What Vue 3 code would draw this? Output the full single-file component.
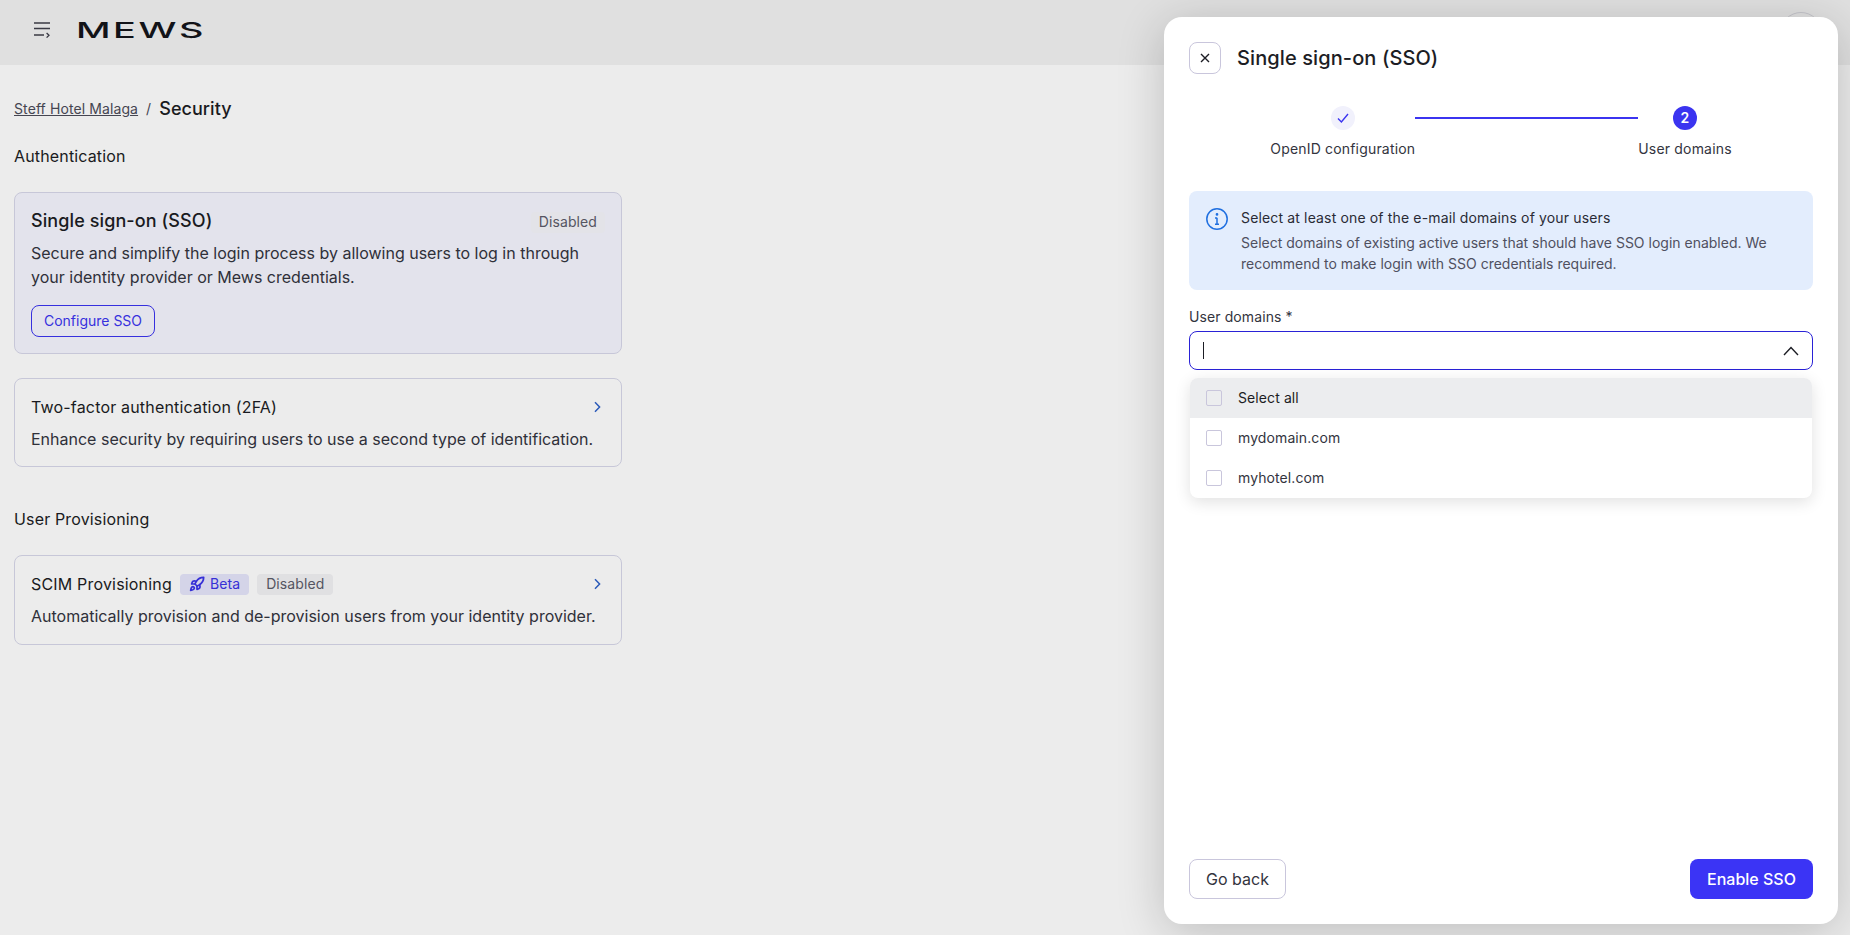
<template>
  <div class="app">
    <header class="topbar">
      <button type="button" class="topbar__menu" aria-label="Menu">
        <svg width="16" height="16" viewBox="0 0 16 16" fill="none" stroke="#3f3f4a" stroke-width="1.3">
          <path d="M0 1h16M0 6.5h16M0 13h10M12.6 11l2.4 2.2-2.4 2.4" />
        </svg>
      </button>
      <svg class="topbar__logo" width="130" height="18" viewBox="0 0 130 18">
        <text x="0" y="16.5" textLength="130" lengthAdjust="spacingAndGlyphs">MEWS</text>
      </svg>
      <span class="topbar__avatar"></span>
    </header>

    <main class="page">
      <nav class="crumbs">
        <a class="crumbs__link">Steff Hotel Malaga</a>
        <span class="crumbs__sep">/</span>
        <span class="crumbs__current">Security</span>
      </nav>

      <h2 class="section-title">Authentication</h2>
      <section class="card card--active">
        <div class="card__head">
          <span class="card__title card__title--big">Single sign-on (SSO)</span>
          <span class="badge badge--plain">Disabled</span>
        </div>
        <p class="card__text">
          Secure and simplify the login process by allowing users to log in through your identity provider or Mews credentials.
        </p>
        <button type="button" class="btn-outline">Configure SSO</button>
      </section>

      <section class="card card--second">
        <div class="card__head">
          <span class="card__title">Two-factor authentication (2FA)</span>
          <svg class="card__chevron" width="16" height="16" viewBox="0 0 16 16" fill="none" stroke="#2f62c8" stroke-width="1.5">
            <path d="M6 3.2 10.6 8 6 12.8" />
          </svg>
        </div>
        <p class="card__text">Enhance security by requiring users to use a second type of identification.</p>
      </section>

      <h2 class="section-title section-title--spaced">User Provisioning</h2>
      <section class="card">
        <div class="card__head">
          <span class="card__title">SCIM Provisioning</span>
          <span class="badge badge--beta">
            <svg width="16" height="16" viewBox="0 0 24 24" fill="none" stroke="#3b34e8" stroke-width="2.6" stroke-linecap="round" stroke-linejoin="round">
              <path d="M4.5 16.5c-1.5 1.26-2 5-2 5s3.74-.5 5-2c.71-.84.7-2.13-.09-2.91a2.18 2.18 0 0 0-2.91-.09z" />
              <path d="m12 15-3-3a22 22 0 0 1 2-3.95A12.88 12.88 0 0 1 22 2c0 2.72-.78 7.5-6 11a22.35 22.35 0 0 1-4 2z" />
              <path d="M9 12H4s.55-3.03 2-4c1.62-1.08 5 0 5 0" />
              <path d="M12 15v5s3.03-.55 4-2c1.08-1.62 0-5 0-5" />
            </svg>
            Beta
          </span>
          <span class="badge">Disabled</span>
          <svg class="card__chevron" width="16" height="16" viewBox="0 0 16 16" fill="none" stroke="#2f62c8" stroke-width="1.5">
            <path d="M6 3.2 10.6 8 6 12.8" />
          </svg>
        </div>
        <p class="card__text">Automatically provision and de-provision users from your identity provider.</p>
      </section>
    </main>

    <div class="overlay">
      <aside class="modal">
        <div class="modal__head">
          <button type="button" class="modal__close" aria-label="Close">
            <svg width="12" height="12" viewBox="0 0 12 12" fill="none" stroke="#1c1d24" stroke-width="1.4">
              <path d="M2 2l8 8M10 2l-8 8" />
            </svg>
          </button>
          <span class="modal__title">Single sign-on (SSO)</span>
        </div>

        <div class="stepper">
          <div class="step">
            <span class="step__dot step__dot--done">
              <svg width="14" height="14" viewBox="0 0 14 14" fill="none" stroke="#3b34f0" stroke-width="1.4">
                <path d="M2 7.6 5.4 11 12 3" />
              </svg>
            </span>
            <span class="step__label">OpenID configuration</span>
          </div>
          <div class="stepper__line"></div>
          <div class="step">
            <span class="step__dot step__dot--current">2</span>
            <span class="step__label">User domains</span>
          </div>
        </div>

        <div class="notice">
          <svg class="notice__icon" width="24" height="24" viewBox="0 0 24 24" fill="none" stroke="#1f6fe0" stroke-width="1.5">
            <circle cx="12" cy="12" r="10.2" />
            <path d="M12 10.8v6.4M10 11h2M10 17.2h4" />
            <circle cx="12" cy="7.4" r="0.6" fill="#1f6fe0" />
          </svg>
          <div>
            <div class="notice__title">Select at least one of the e-mail domains of your users</div>
            <div class="notice__text">
              Select domains of existing active users that should have SSO login enabled. We recommend to make login with SSO credentials required.
            </div>
          </div>
        </div>

        <label class="field-label">User domains *</label>
        <div class="select">
          <span class="select__caret"></span>
          <svg width="16" height="10" viewBox="0 0 16 10" fill="none" stroke="#1c1d24" stroke-width="1.4">
            <path d="M1 9l7-7.4L15 9" />
          </svg>
        </div>

        <ul class="options">
          <li
            v-for="(option, idx) in options"
            :key="option"
            class="options__row"
            :class="{ 'options__row--hover': idx === 0 }"
          >
            <span class="checkbox"></span>
            {{ option }}
          </li>
        </ul>

        <div class="modal__foot">
          <button type="button" class="btn-back">Go back</button>
          <button type="button" class="btn-primary">Enable SSO</button>
        </div>
      </aside>
    </div>
  </div>
</template>

<script setup>
const options = ['Select all', 'mydomain.com', 'myhotel.com']
</script>

<style scoped>
.app {
  position: relative;
  height: 935px;
  overflow: hidden;
  background: #FFFFFF;
  color: #1C1D24;
  font-family: Inter, "Liberation Sans", sans-serif;
  font-size: 16px;
  line-height: 24px;
  letter-spacing: 0.1px;
}

.topbar {
  display: flex;
  align-items: center;
  height: 65px;
  padding: 0 12px 0 34px;
  background: #F2F2F2;
}

.topbar__menu {
  display: flex;
  padding: 0;
  border: 0;
  background: none;
  margin: 0 26px 5px 0;
}

.topbar__logo {
  margin-top: -6px;
  overflow: visible;
}

.topbar__logo text {
  font-family: Inter, sans-serif;
  font-size: 22px;
  font-weight: 500;
  letter-spacing: 1.5px;
  fill: #14151B;
}

.topbar__avatar {
  width: 40px;
  height: 40px;
  margin-left: auto;
  margin-right: 16px;
  border: 1px solid #D5D5DC;
  border-radius: 50%;
}

.page {
  display: flex;
  flex-direction: column;
  align-items: flex-start;
  padding: 32px 14px;
}

.crumbs {
  display: flex;
  align-items: center;
  height: 24px;
  gap: 8px;
  font-size: 14px;
}

.crumbs__link {
  color: #4B4B58;
  text-decoration: underline;
}

.crumbs__sep {
  color: #4B4B58;
}

.crumbs__current {
  font-size: 18px;
  font-weight: 500;
  letter-spacing: 0.05px;
}

.section-title {
  margin: 23px 0 24px;
  font-size: 16px;
  font-weight: 400;
  line-height: 24px;
  letter-spacing: 0.15px;
}

.section-title--spaced {
  margin-top: 40px;
}

.card {
  box-sizing: border-box;
  width: 608px;
  padding: 16px;
  background: #FFFFFF;
  border: 1px solid #D8D8EA;
  border-radius: 8px;
}

.card--active {
  background: #F6F6FF;
}

.card--second {
  margin-top: 24px;
  padding-bottom: 15px;
}

.card__head {
  display: flex;
  align-items: center;
  gap: 8px;
  height: 24px;
  margin-bottom: 8px;
}

.card__title {
  font-weight: 400;
  letter-spacing: 0.18px;
}

.card__title--big {
  font-size: 18px;
  font-weight: 500;
  letter-spacing: 0.1px;
}

.card__chevron {
  margin-left: auto;
}

.card__text {
  margin: 0;
  color: #33343E;
  letter-spacing: 0;
}

.badge {
  display: inline-flex;
  align-items: center;
  gap: 5px;
  height: 21px;
  padding: 0 9px;
  border-radius: 4px;
  background: #F3F3F5;
  color: #5C5C6A;
  font-size: 14px;
}

.badge--plain {
  margin-left: auto;
  margin-top: 2px;
  padding: 0 8px;
  background: #F6F6FB;
}

.badge--beta {
  background: #E5E5FB;
  color: #3B34E8;
}

.btn-outline {
  height: 32px;
  width: 124px;
  margin-top: 16px;
  padding: 0;
  display: block;
  background: transparent;
  border: 1px solid #3B34F0;
  border-radius: 8px;
  color: #3B34F0;
  font: inherit;
  font-size: 14px;
}

.overlay {
  position: absolute;
  inset: 0;
  display: flex;
  justify-content: flex-end;
  padding: 17px 12px 11px 0;
  background: rgba(0, 0, 0, 0.075);
}

.modal {
  box-sizing: border-box;
  display: flex;
  flex-direction: column;
  width: 674px;
  padding: 25px;
  background: #FFFFFF;
  border-radius: 18px;
  box-shadow: 0 8px 48px rgba(0, 0, 0, 0.2);
}

.modal__head {
  display: flex;
  align-items: center;
  gap: 16px;
}

.modal__close {
  display: flex;
  align-items: center;
  justify-content: center;
  width: 32px;
  height: 32px;
  padding: 0;
  background: #FFFFFF;
  border: 1px solid #C9C6DC;
  border-radius: 8px;
}

.modal__title {
  font-size: 20px;
  font-weight: 500;
}

.stepper {
  display: flex;
  justify-content: center;
  margin-top: 32px;
}

.step {
  display: flex;
  flex-direction: column;
  align-items: center;
}

.step__dot {
  display: flex;
  align-items: center;
  justify-content: center;
  width: 24px;
  height: 24px;
  border-radius: 50%;
  font-size: 14px;
  font-weight: 600;
}

.step__dot--done {
  background: #F1F1FC;
}

.step__dot--current {
  background: #3B34F0;
  color: #FFFFFF;
}

.step__label {
  margin-top: 7px;
  font-size: 14px;
  letter-spacing: 0.18px;
  color: #33343E;
  white-space: nowrap;
}

.stepper__line {
  width: 223px;
  height: 2px;
  margin-top: 11px;
  background: #3B34F0;
}

.notice {
  display: flex;
  gap: 12px;
  height: 99px;
  box-sizing: border-box;
  margin-top: 30px;
  padding: 16px;
  background: #E3EDFD;
  border-radius: 8px;
  font-size: 14px;
  line-height: 21px;
  letter-spacing: 0;
}

.notice__icon {
  flex-shrink: 0;
}

.notice__title {
  color: #2A2B35;
  letter-spacing: 0.15px;
}

.notice__text {
  margin-top: 4px;
  color: #4F5060;
}

.field-label {
  margin-top: 15px;
  font-size: 14px;
  color: #33343E;
}

.select {
  display: flex;
  align-items: center;
  justify-content: space-between;
  box-sizing: border-box;
  height: 39px;
  margin-top: 2px;
  padding: 0 13px;
  border: 1px solid #2A22D6;
  border-radius: 8px;
}

.select__caret {
  width: 1px;
  height: 17px;
  background: #1C1D24;
}

.options {
  margin: 8px 1px 0;
  padding: 0;
  list-style: none;
  border-radius: 8px;
  overflow: hidden;
  background: #FFFFFF;
  box-shadow: 0 4px 16px rgba(0, 0, 0, 0.12);
}

.options__row {
  display: flex;
  align-items: center;
  gap: 16px;
  height: 40px;
  padding-left: 16px;
  font-size: 14px;
  color: #33343E;
}

.options__row--hover {
  background: #ECEDEF;
  color: #1C1D24;
}

.checkbox {
  box-sizing: border-box;
  width: 16px;
  height: 16px;
  background: #FFFFFF;
  border: 1px solid #C9C6DC;
  border-radius: 2px;
}

.options__row--hover .checkbox {
  background: transparent;
}

.modal__foot {
  display: flex;
  justify-content: space-between;
  margin-top: auto;
}

.btn-back,
.btn-primary {
  height: 40px;
  padding: 0;
  border-radius: 8px;
  font: inherit;
  font-size: 16px;
  letter-spacing: 0;
}

.btn-back {
  width: 97px;
  background: #FFFFFF;
  border: 1px solid #C9C6DC;
  color: #33343E;
}

.btn-primary {
  width: 123px;
  background: #3B34F5;
  border: 0;
  color: #FFFFFF;
  font-weight: 500;
}
</style>
